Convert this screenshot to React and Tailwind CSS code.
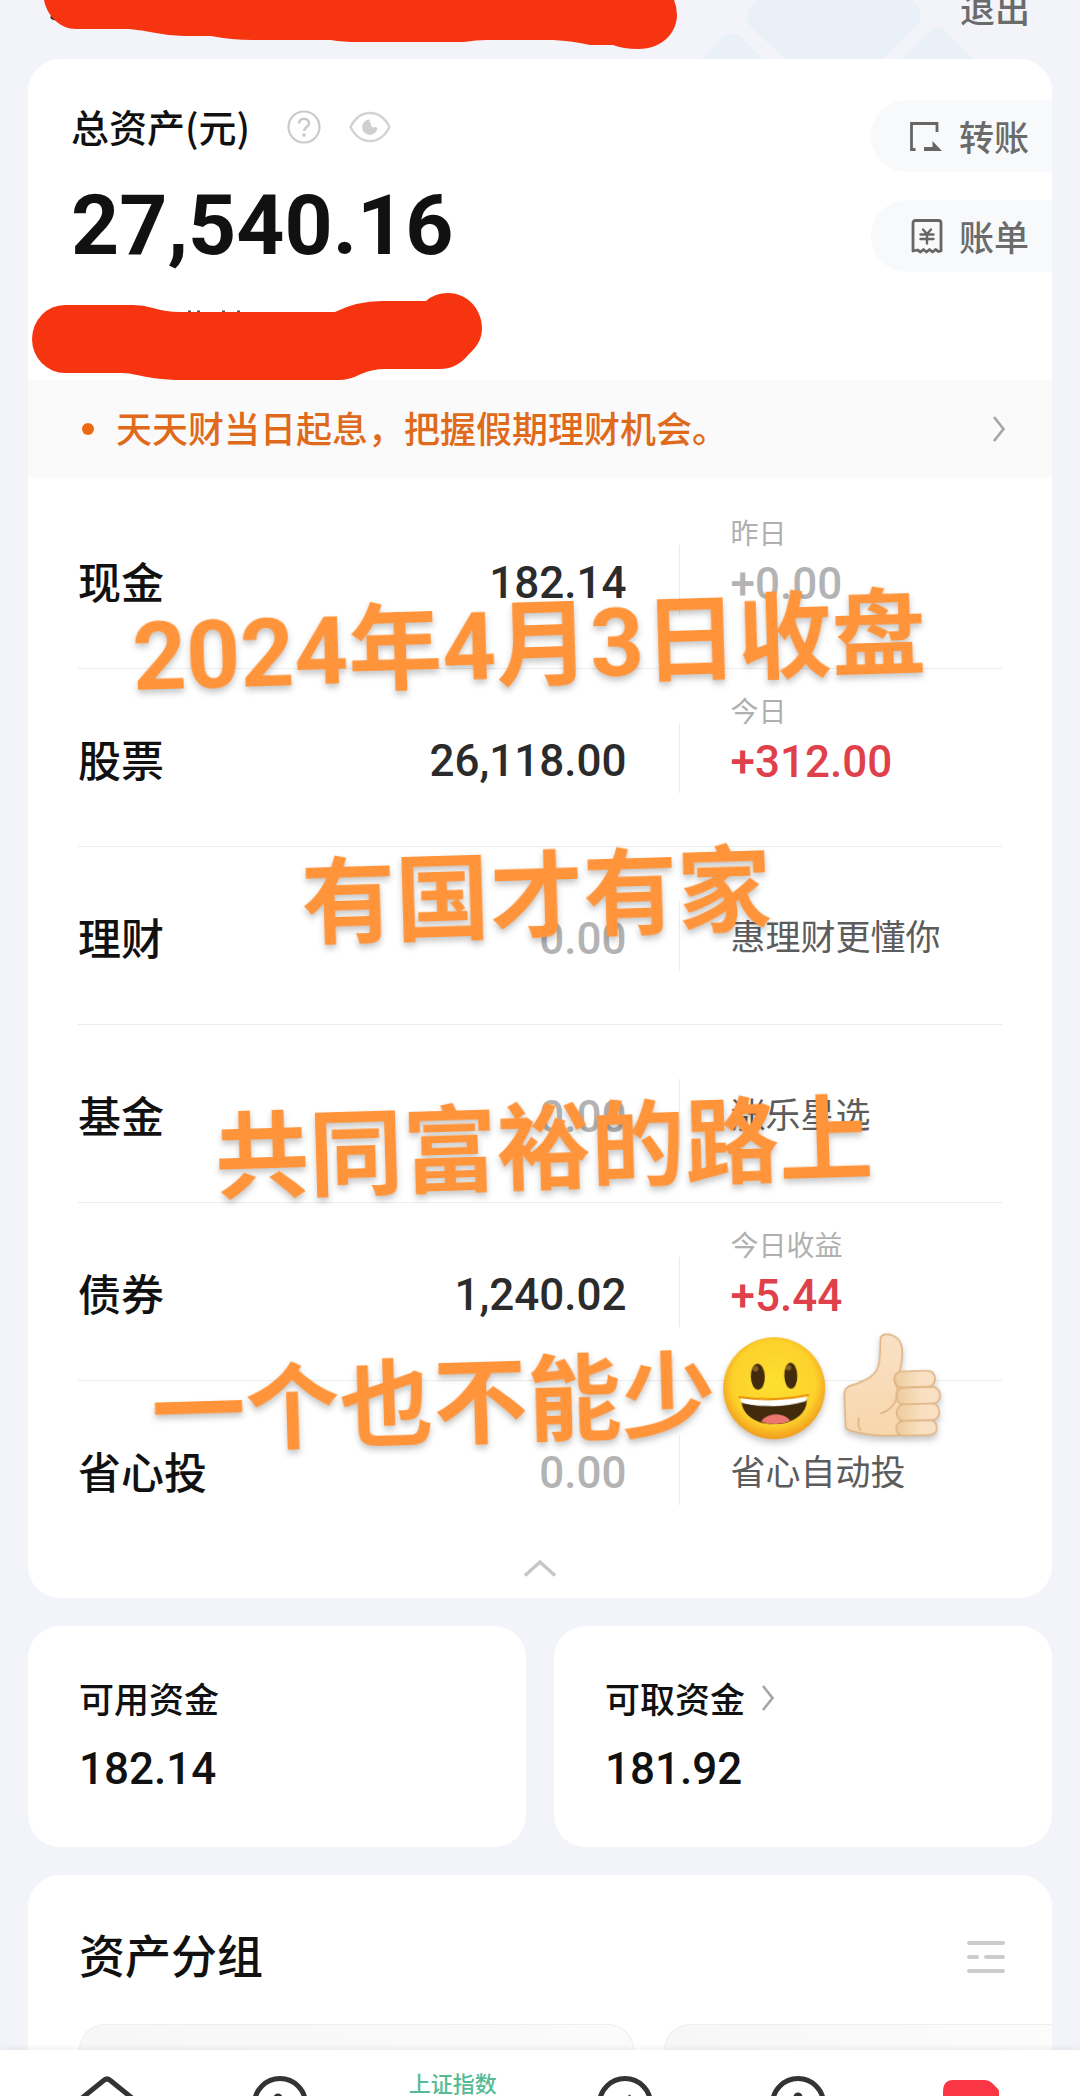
import React, { useState } from 'react';

const assets = [
  { id: 'cash', name: '现金', amount: '182.14', note: '昨日', change: '+0.00', tone: 'muted' },
  { id: 'stock', name: '股票', amount: '26,118.00', note: '今日', change: '+312.00', tone: 'up' },
  { id: 'wealth', name: '理财', amount: '0.00', slogan: '惠理财更懂你' },
  { id: 'fund', name: '基金', amount: '0.00', slogan: '涨乐星选' },
  { id: 'bond', name: '债券', amount: '1,240.02', note: '今日收益', change: '+5.44', tone: 'up' },
  { id: 'auto', name: '省心投', amount: '0.00', slogan: '省心自动投' },
];

const HelpIcon = () => (
  <svg width="34" height="34" viewBox="0 0 34 34" fill="none" stroke="#c9c9c9" strokeWidth="2.200">
    <circle cx="17" cy="17" r="15.500" />
    <path d="M12 13.500c0-6.500 10-6.500 10 0 0 3.500-5 3.500-5 7.500" strokeWidth="2.500" />
    <circle cx="17" cy="25" r="1.800" fill="#c9c9c9" stroke="none" />
  </svg>
);

const EyeIcon = () => (
  <svg width="42" height="32" viewBox="0 0 42 32" fill="none">
    <path d="M1.500 16C6 7 13 2 21 2s15 5 19.500 14C36 25 29 30 21 30S6 25 1.500 16Z" stroke="#d2d2d2" strokeWidth="2.400" />
    <path d="M21 8.500a7.700 7.700 0 1 0 7.500 8.500l-2-1-1.500.5a3 3 0 0 1-3-4l-1.500-1.500Z" fill="#cfcfcf" />
  </svg>
);

const TransferIcon = () => (
  <svg width="36" height="36" viewBox="0 0 36 36" fill="none">
    <path d="M8.500 31.500H4.500V5.500H30V14" stroke="#666" strokeWidth="2.800" />
    <path d="M17 33v-4h8.500v-6L35 33Z" fill="#666" />
  </svg>
);

const BillIcon = () => (
  <svg width="36" height="36" viewBox="0 0 36 36" fill="none" stroke="#666" strokeWidth="2.800" strokeLinejoin="round" strokeLinecap="round">
    <path d="M6 33V5q0-2.500 2.500-2.500h23Q34 2.500 34 5v28l-2.500.5-3-2-3 2.500-3-2.500-3 2.500-3-2.500-3 2.500-3-2Z" />
    <path d="M16 11.500 20 16l4-4.500M20 16v9.500M13.500 16.500h13M13.500 21h13" strokeWidth="2.400" />
  </svg>
);

const ChevronRight = () => (
  <svg width="14" height="28" viewBox="0 0 14 28" fill="none" stroke="#a5a5a5" strokeWidth="2.600">
    <path d="M2 2l9.500 12L2 26" />
  </svg>
);

const ListIcon = () => (
  <svg width="38" height="34" viewBox="0 0 38 34" stroke="#cccccc" strokeWidth="4" strokeLinecap="round">
    <path d="M2 3h34M2 17h8M19 17h17M2 31h34" />
  </svg>
);

const SmileEmoji = () => (
  <svg className="inline-block w-[118px] h-[118px]" viewBox="0 0 118 118">
    <defs>
      <radialGradient id="face" cx="50%" cy="45%" r="55%">
        <stop offset="0" stopColor="#fde030" />
        <stop offset="0.75" stopColor="#fcd12b" />
        <stop offset="1" stopColor="#f19b1c" />
      </radialGradient>
    </defs>
    <circle cx="59" cy="59" r="51" fill="url(#face)" />
    <ellipse cx="43" cy="47" rx="7" ry="13" fill="#422b0d" />
    <ellipse cx="76" cy="47" rx="6.500" ry="13" fill="#422b0d" />
    <circle cx="41" cy="39" r="2.800" fill="#896024" />
    <circle cx="74" cy="39" r="2.800" fill="#896024" />
    <path d="M26 69q33 12 65 0c2 16-14 26-32 26S25 85 26 69Z" fill="#422b0d" />
    <path d="M25 67q-.5 4 2 6 31 8 63 0 2-3 1.500-6-32 7-66.500 0Z" fill="#fff" />
    <path d="M45 92c5-9 24-9 29 0q-7 3-14.500 3T45 92Z" fill="#ed7770" />
    <path d="M24 67q35 6 69 0" fill="none" stroke="#eb8f00" strokeWidth="2" strokeLinecap="round" />
  </svg>
);

const ThumbEmoji = () => (
  <svg className="inline-block w-[118px] h-[118px]" viewBox="377 28 354 354">
    <defs>
      <linearGradient id="skin" x1="0" y1="0" x2="0" y2="1">
        <stop offset="0" stopColor="#fae0c5" />
        <stop offset="1" stopColor="#f7d7ab" />
      </linearGradient>
      <linearGradient id="finger" x1="0" y1="0" x2="1" y2="0">
        <stop offset="0" stopColor="#eccb9c" />
        <stop offset="0.6" stopColor="#fae0c2" />
      </linearGradient>
    </defs>
    <g stroke="#dfb586" strokeWidth="5" strokeLinejoin="round" strokeLinecap="round">
      <path d="M523 66c3-18 34-18 54 4 14 16 12 40 8 64l-10 44 20 10v170l-75-1c-40-3-90-14-105-23-5-4-4-10-4-20l-1-82c0-14 3-20 15-26 40-14 72-22 86-50 12-24 10-60 12-90Z" fill="url(#skin)" />
      <path d="M572 180h30v174h-30Z" fill="#eccb9c" stroke="none" />
      <rect x="561" y="166" width="122" height="48" rx="22" fill="url(#finger)" />
      <rect x="565" y="215" width="132" height="50" rx="23" fill="url(#finger)" />
      <rect x="565" y="265" width="128" height="50" rx="23" fill="url(#finger)" />
      <rect x="563" y="315" width="121" height="44" rx="20" fill="url(#finger)" />
      <path d="M561 190c14 30 14 82-43 100M451 302q-4 24 4 36" fill="none" />
    </g>
  </svg>
);

const Header = () => (
  <header className="relative flex h-[59px] items-start justify-end px-[50px] overflow-hidden">
    <svg className="absolute right-[107px] top-0" width="271" height="59" viewBox="702 0 271 59" fill="#eaf0f8">
      <path d="M757 0q-18 15-4 29l32 30h97l35-33q10-10-5-26Z" />
      <path d="M702 59l20-21q10-9 20 0l21 21ZM902 59l28-28q8-8 16 0l27 28Z" />
    </svg>
    <button className="relative -mt-2.5 text-[35px] leading-9 font-medium text-[#6b6b6b]">退出</button>
  </header>
);

const SideButton = ({ icon, label }) => (
  <button className="flex h-[72px] items-center gap-4 rounded-l-full bg-[#f8f9fb] pl-9 pr-[23px] text-[35px] font-medium text-[#6b6b6b]">
    {icon}
    <span>{label}</span>
  </button>
);

const AssetRow = ({ item, last }) => {
  const empty = item.amount === '0.00';
  return (
    <li className={`flex h-[178px] items-center ${last ? '' : 'border-b border-[#ececec]'}`}>
      <div className="flex w-[65%] items-center justify-between pr-[52px]">
        <span className="text-[43px] leading-[48px] font-medium text-[#111]">{item.name}</span>
        <span className={`pt-1.5 font-[Roboto] text-[44px] leading-[48px] font-medium ${empty ? 'text-[#b3b3b3]' : 'text-[#2b2b2b]'}`}>
          {item.amount}
        </span>
      </div>
      <span className="h-[70px] w-px bg-[#ececec]"></span>
      {item.slogan ? (
        <span className="pl-[51px] text-[35px] text-[#5c5c5c]">{item.slogan}</span>
      ) : (
        <div className="flex flex-col gap-2.5 pb-[38px] pl-[51px]">
          <span className="text-[28px] leading-9 text-[#b0b0b0]">{item.note}</span>
          <span className={`font-[Roboto] text-[44px] leading-[48px] font-medium ${item.tone === 'up' ? 'text-[#e0404a]' : 'text-[#b3b3b3]'}`}>
            {item.change}
          </span>
        </div>
      )}
    </li>
  );
};

const FundCard = ({ label, value, link }) => (
  <div className="flex-1 rounded-[32px] bg-white px-[51px] pt-12 pb-[54px]">
    <div className="flex items-center gap-4 text-[35px] leading-[48px] font-medium text-[#111]">
      <span>{label}</span>
      {link && <ChevronRight />}
    </div>
    <div className="mt-[23px] font-[Roboto] text-[44px] leading-[48px] font-medium text-[#111]">{value}</div>
  </div>
);

const Caption = () => (
  <div className="pointer-events-none absolute inset-x-0 top-[511px] rotate-[-1.7deg] text-center text-[94px] leading-[252px] font-bold whitespace-nowrap text-[#ff943a] drop-shadow-[0_4px_3px_rgba(0,0,0,0.22)]">
    <p>
      <span className="font-[Roboto] leading-none">2024</span>年
      <span className="font-[Roboto] leading-none">4</span>月
      <span className="font-[Roboto] leading-none">3</span>日收盘
    </p>
    <p>有国才有家</p>
    <p>共同富裕的路上</p>
    <p className="flex items-center justify-center">
      <span>一个也不能少</span>
      <span className="flex pt-1">
        <SmileEmoji />
        <ThumbEmoji />
      </span>
    </p>
  </div>
);

// hand-drawn strokes that hide the account details
const Redaction = () => (
  <svg className="pointer-events-none absolute left-0 top-0" width="700" height="400" viewBox="0 0 700 400" fill="#f63410">
    <path d="M50 17q2 4 5 3l-2-5Z" fill="#222" />
    <path d="M44 0C47 16 60 29 76 29h53q12 1 27 4 14 3 28 3h27q20 4 42 4h78q12 2 27 2h106q12-2 23-2h66q20 1 37 5h23q10 4 25 4c26 0 39-18 39-34q0-8-3-15Z" />
    <path d="M188 312h3M197 312h3M222 312h3M237 312h3" stroke="#555" strokeWidth="3" />
    <path d="M65 305h68q10 0 20 3 13 4 27 4h155q22-11 47-11h44q9-8 22-8c20 0 34 17 34 35 0 11-5 19-13 26q-12 15-29 15h-55q-12 0-24 5-11 6-23 6H175q-22-1-38-5-8-2-15-2H65a33 34 0 0 1 0-68Z" />
  </svg>
);

const tabs = [
  { id: 'home', shape: <path d="M3 22 24 5q4-4 8 0l21 17v32H3Z" /> },
  { id: 'market', shape: <><circle cx="28" cy="28" r="25.500" /><circle cx="26" cy="22" r="2" fill="#333" /></> },
  { id: 'index', text: '上证指数' },
  { id: 'trade', shape: <><circle cx="28" cy="28" r="25.500" /><path d="M33 19 26 30" strokeWidth="2" /></> },
  { id: 'find', shape: <><circle cx="28" cy="28" r="25.500" /><circle cx="28" cy="21" r="2" fill="#333" /></> },
  { id: 'mine', shape: <path d="M0 16q0-12 10-12h32q4 0 7 3l5 5q3 3 3 8v36H0Z" fill="#fb3644" stroke="none" /> },
];

const TabBar = () => (
  <nav className="relative flex h-[46px] overflow-hidden bg-white pr-[23px] pl-[21px] shadow-[0_-2px_6px_rgba(0,0,0,0.06)]">
    {tabs.map((tab) => (
      <button key={tab.id} aria-label={tab.id} className="flex flex-1 items-start justify-center">
        {tab.text ? (
          <span className="pt-[18px] text-[22px] leading-7 font-medium text-[#56bb94]">{tab.text}</span>
        ) : (
          <svg className="mt-[26px] shrink-0" width="56" height="56" viewBox="0 0 56 56" fill="none" stroke="#333" strokeWidth="5" strokeLinejoin="round">
            {tab.shape}
          </svg>
        )}
      </button>
    ))}
  </nav>
);

const App = () => {
  const [expanded, setExpanded] = useState(true);
  const rows = expanded ? assets : assets.slice(0, 2);

  return (
    <div className="relative min-h-screen overflow-hidden bg-[#f2f4f9] font-['Noto_Sans_CJK_SC',sans-serif]">
      <Header />

      <main>
        <section className="mx-7 overflow-hidden rounded-[32px] bg-white">
          <div className="flex items-start justify-between">
            <div className="pt-[43px] pb-28 pl-[43px]">
              <div className="flex items-center text-[38px] leading-[48px] font-medium text-[#111]">
                <h1>总资产(元)</h1>
                <button aria-label="说明" className="mt-0.5 ml-[37px]"><HelpIcon /></button>
                <button aria-label="隐藏金额" className="mt-0.5 ml-7"><EyeIcon /></button>
              </div>
              <div className="mt-[34px] font-[Roboto] text-[84px] leading-[84px] font-bold text-[#111]">27,540.16</div>
            </div>
            <div className="flex flex-col gap-7 pt-[41px]">
              <SideButton icon={<TransferIcon />} label="转账" />
              <SideButton icon={<BillIcon />} label="账单" />
            </div>
          </div>

          <a href="#notice" className="flex h-[98px] items-center bg-[#fafafa] pl-[54px] pr-[46px] text-4xl leading-[48px] font-medium text-[#e06a1b]">
            <span className="mr-[22px] h-3 w-3 rounded-full bg-[#ee6a10]"></span>
            <span className="flex-1 pb-1">天天财当日起息，把握假期理财机会。</span>
            <ChevronRight />
          </a>

          <ul className="mx-[50px] mt-[13px]">
            {rows.map((item, index) => (
              <AssetRow key={item.id} item={item} last={index === rows.length - 1} />
            ))}
          </ul>

          <button aria-label="收起" onClick={() => setExpanded(!expanded)} className="flex h-[39px] w-full justify-center">
            <svg width="34" height="18" viewBox="0 0 34 18" fill="none" stroke="#c6c6c6" strokeWidth="3.500">
              <path d="M2 16.500 17 3l15 13.500" />
            </svg>
          </button>
        </section>

        <section className="mx-7 mt-7 flex gap-7">
          <FundCard label="可用资金" value="182.14" />
          <FundCard label="可取资金" value="181.92" link />
        </section>

        <section className="mx-7 mt-7 overflow-hidden rounded-t-[32px] bg-white">
          <div className="flex items-center justify-between pt-[54px] pr-[47px] pb-[39px] pl-[51px]">
            <h2 className="pb-2 text-[46px] leading-[48px] font-medium text-[#111]">资产分组</h2>
            <button aria-label="管理分组"><ListIcon /></button>
          </div>
          <div className="flex h-[26px] gap-[30px] pl-[51px]">
            <div className="w-[57%] rounded-t-[26px] border border-b-0 border-[#eeeeee] bg-linear-to-r from-[#f7f7f7] to-[#fbfbfb]"></div>
            <div className="flex-1 rounded-tl-[26px] border-t border-l border-[#eeeeee] bg-linear-to-r from-[#f7f7f7] to-[#fcfcfc]"></div>
          </div>
        </section>
      </main>

      <TabBar />
      <Redaction />
      <Caption />
    </div>
  );
};

export default App;
